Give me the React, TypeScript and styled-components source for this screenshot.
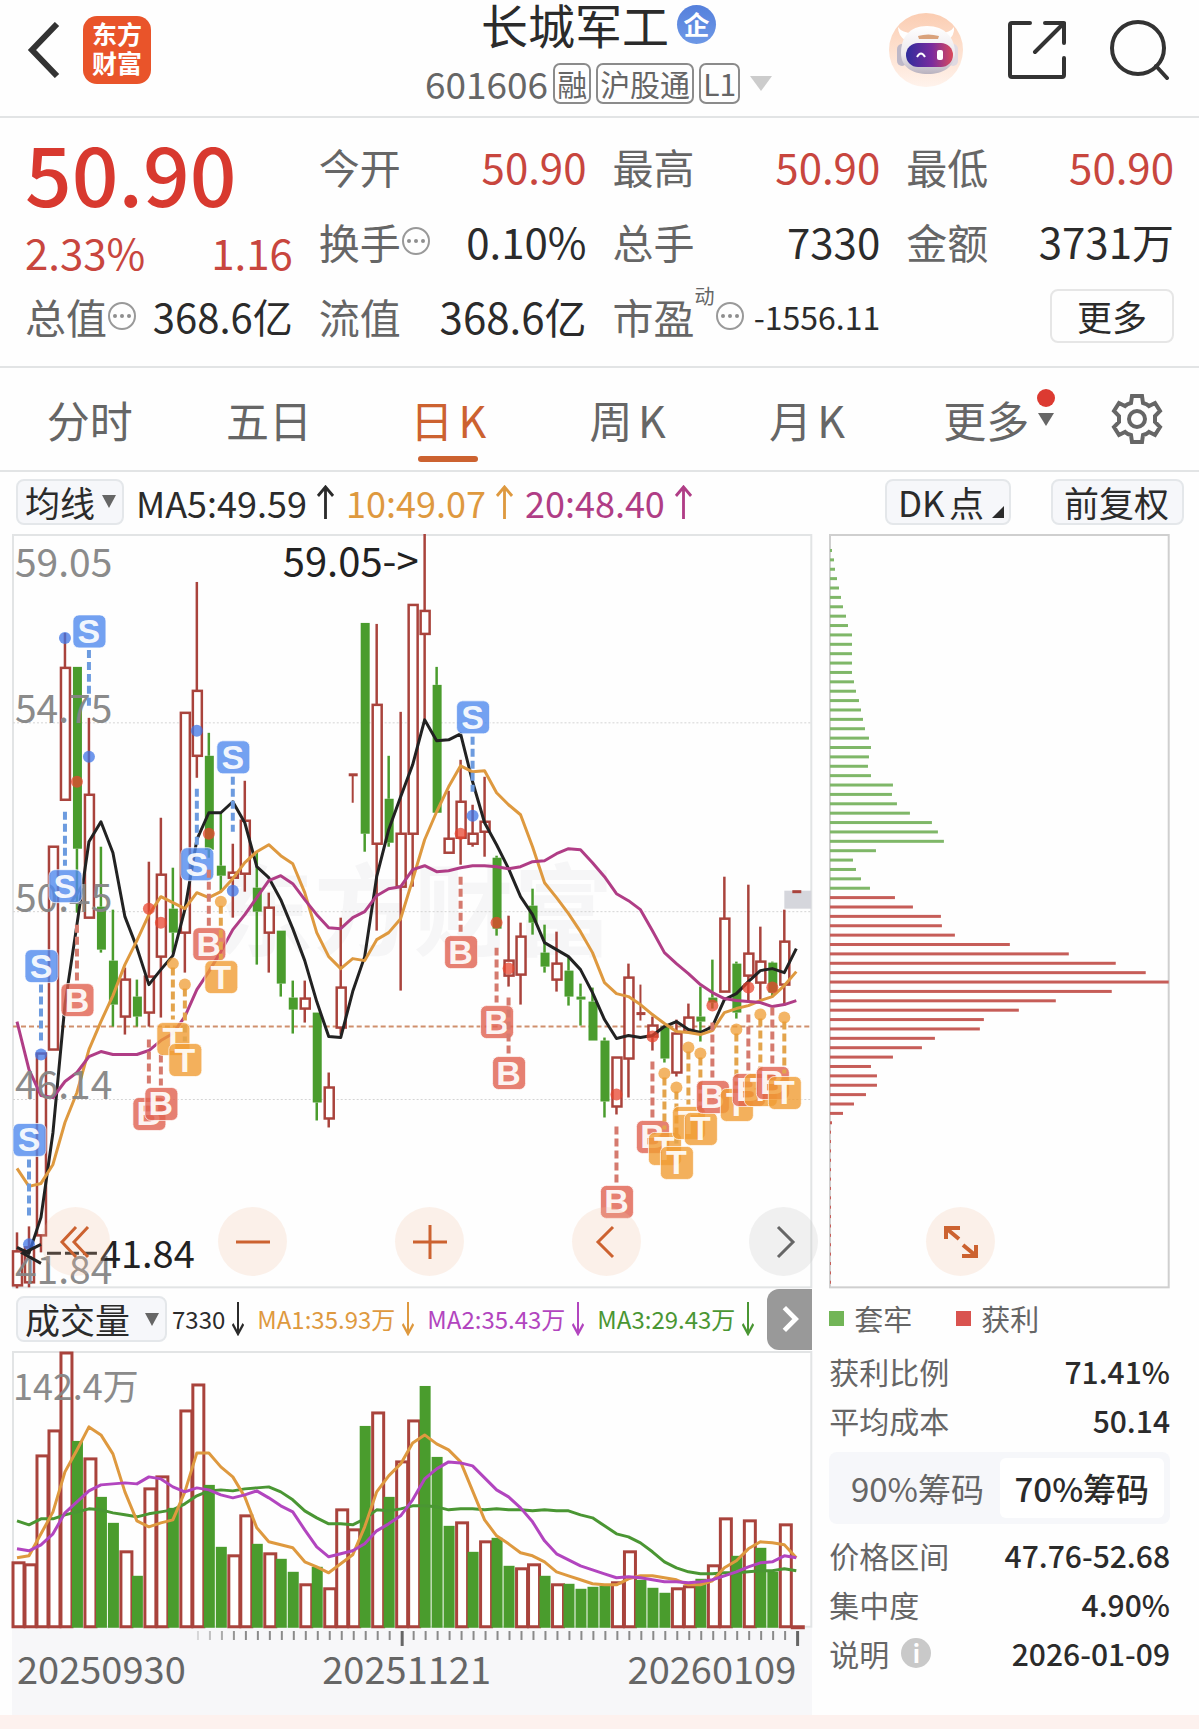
import React, { useState } from "react";
import styled, { createGlobalStyle, css } from "styled-components";

const color = {
  ink: "#2b2b2b",
  label: "#666666",
  up: "#d8392f",
  rise: "#a9433c",
  fall: "#4a9c2d",
  accent: "#cc6230",
  line: "#e2e4e5",
  amber: "#de993f",
  violet: "#b03d86",
  purple: "#b245bf",
  green: "#4a9633",
};

const fontStack = '"Noto Sans CJK SC", "Noto Sans", sans-serif';

const GlobalStyle = createGlobalStyle`
  *, *::before, *::after { box-sizing: border-box; }
  body { margin: 0; background: #fefefe; font-family: ${fontStack}; color: ${color.ink}; }
  button, select { font-family: inherit; color: inherit; margin: 0; }
  button { padding: 0; border: 0; background: none; cursor: pointer; }
  svg { display: block; }
  h1, p, dl, dd, dt { margin: 0; font-weight: 400; }
`;

/* ---------- header ---------- */

const Header = styled.header`
  display: grid;
  grid-template-columns: 1fr auto 1fr;
  height: 118px;
  padding: 0 29px 0 27px;
  border-bottom: 2px solid ${color.line};
`;

const HeaderSide = styled.div<{ $end?: boolean }>`
  display: flex;
  align-items: center;
  height: 100px;
  gap: ${(p) => (p.$end ? "43px" : "23px")};
  justify-content: ${(p) => (p.$end ? "flex-end" : "flex-start")};
`;

const Brand = styled.div`
  width: 68px;
  height: 68px;
  padding-top: 3px;
  border-radius: 14px;
  background: #e9542a;
  color: #fff;
  font-size: 25px;
  font-weight: 700;
  line-height: 29px;
  text-align: center;
`;

const TitleBlock = styled.div`
  display: flex;
  flex-direction: column;
  align-items: center;
`;

const TitleRow = styled.div`
  display: flex;
  align-items: center;
  gap: 8px;
  height: 48px;
`;

const StockName = styled.h1`
  font-size: 47px;
  line-height: 48px;
`;

const CompanyBadge = styled.span`
  width: 39px;
  height: 39px;
  border-radius: 50%;
  background: linear-gradient(#5580dc, #6d98e6);
  color: #fff;
  font-size: 26px;
  font-weight: 700;
  line-height: 37px;
  text-align: center;
`;

const CodeRow = styled.div`
  display: flex;
  align-items: center;
  gap: 5px;
  height: 70px;
  color: ${color.label};
`;

const Code = styled.span`
  font-size: 37px;
  line-height: 42px;
`;

const Tag = styled.span`
  height: 41px;
  padding: 0 2px;
  border: 2px solid #8b8b8b;
  border-radius: 7px;
  font-size: 30px;
  line-height: 36px;
`;

const Caret = styled.i<{ $w: number; $h: number; $c: string }>`
  width: 0;
  height: 0;
  border: solid transparent;
  border-width: ${(p) => `${p.$h}px ${p.$w / 2}px 0`};
  border-top-color: ${(p) => p.$c};
`;

const CodeCaret = styled(Caret)`
  margin-left: 5px;
`;

/* ---------- quote ---------- */

const Quote = styled.section`
  display: grid;
  grid-template-columns: repeat(4, minmax(0, 1fr));
  grid-template-rows: repeat(3, 75px);
  column-gap: 26px;
  padding: 10px 25px 13px;
  border-bottom: 2px solid ${color.line};
`;

const Price = styled.div`
  grid-row: span 2;
  color: ${color.up};
`;

const Last = styled.p`
  font-size: 82px;
  font-weight: 500;
  line-height: 88px;
`;

const Change = styled.p`
  display: flex;
  justify-content: space-between;
  padding-top: 8px;
  font-size: 42px;
  line-height: 56px;
  color: #c8463e;
`;

const Cell = styled.div`
  display: flex;
  align-items: center;
  white-space: nowrap;
`;

const CellLabel = styled.span`
  font-size: 41px;
  line-height: 56px;
  color: ${color.label};
`;

const Sup = styled.sup`
  align-self: flex-start;
  padding-top: 4px;
  font-size: 20px;
  line-height: 28px;
  color: ${color.label};
`;

const CellValue = styled.span<{ $up?: boolean; $size?: number }>`
  margin-left: auto;
  font-size: ${(p) => p.$size ?? 42}px;
  line-height: 56px;
  color: ${(p) => (p.$up ? "#c8463e" : color.ink)};
`;

const MoreButton = styled.button`
  width: 124px;
  height: 54px;
  margin-left: auto;
  border: 2px solid #e6e6e6;
  border-radius: 8px;
  font-size: 35px;
  line-height: 48px;
`;

/* ---------- tabs ---------- */

const Tabs = styled.nav`
  display: flex;
  height: 104px;
  border-bottom: 2px solid ${color.line};
`;

const Tab = styled.button<{ $on?: boolean }>`
  position: relative;
  flex: 1;
  font-size: 43px;
  line-height: 60px;
  text-autospace: normal;
  color: ${(p) => (p.$on ? color.accent : color.label)};
  ${(p) =>
    p.$on &&
    css`
      &::after {
        content: "";
        position: absolute;
        left: 50%;
        bottom: 8px;
        width: 60px;
        height: 6px;
        margin-left: -30px;
        border-radius: 3px;
        background: ${color.accent};
      }
    `}
`;

const TabMark = styled.span`
  position: absolute;
  top: 21px;
  right: 21px;
  display: flex;
  flex-direction: column;
  align-items: center;
  gap: 6px;
`;

const RedDot = styled.i`
  width: 18px;
  height: 18px;
  border-radius: 50%;
  background: #dc3a31;
`;

const GearButton = styled.button`
  display: flex;
  align-items: center;
  justify-content: center;
  width: 123px;
`;

/* ---------- toolbars ---------- */

const Toolbar = styled.div`
  display: flex;
  align-items: center;
  height: 62px;
  padding: 0 15px 3px 16px;
`;

const boxed = css`
  height: 46px;
  border: 2px solid #e4e7ea;
  border-radius: 8px;
  background: #f6f7fa;
  font-size: 35px;
  line-height: 40px;
`;

const Picker = styled.label`
  position: relative;
  display: flex;
  align-items: center;
`;

const PickerSelect = styled.select<{ $room: number }>`
  ${boxed}
  appearance: none;
  padding: 0 ${(p) => p.$room}px 0 7px;
  outline: none;
`;

const PickerCaret = styled(Caret)`
  position: absolute;
  right: 8px;
  pointer-events: none;
`;

const BoxButton = styled.button<{ $corner?: boolean }>`
  ${boxed}
  position: relative;
  padding: 0 ${(p) => (p.$corner ? "25px" : "13px")} 0 11px;
  margin-left: ${(p) => (p.$corner ? "auto" : "40px")};
  text-autospace: normal;
  ${(p) =>
    p.$corner &&
    css`
      &::after {
        content: "";
        position: absolute;
        right: 5px;
        bottom: 5px;
        border: solid transparent;
        border-width: 0 0 12px 12px;
        border-bottom-color: ${color.ink};
      }
    `}
`;

const Average = styled.span<{ $c: string }>`
  display: flex;
  align-items: center;
  gap: 10px;
  margin-left: 12px;
  font-size: 36px;
  line-height: 46px;
  color: ${(p) => p.$c};
`;

/* ---------- charts ---------- */

const Board = styled.main`
  display: grid;
  grid-template-columns: minmax(0, 801fr) minmax(0, 341fr);
  column-gap: 17px;
  padding: 0 29px 0 12px;
`;

const Plot = styled.div`
  position: relative;
`;

const Drawing = styled.svg`
  width: 100%;
  height: auto;
  overflow: visible;
  font-family: ${fontStack};
`;

const PlotControls = styled.div`
  position: absolute;
  left: 29px;
  right: -6px;
  bottom: 12px;
  display: flex;
  justify-content: space-between;
`;

const RoundButton = styled.button<{ $muted?: boolean }>`
  display: flex;
  align-items: center;
  justify-content: center;
  width: 69px;
  height: 69px;
  border-radius: 50%;
  background: ${(p) => (p.$muted ? "rgba(200, 200, 200, 0.25)" : "rgba(240, 190, 160, 0.22)")};
  color: ${(p) => (p.$muted ? "#666" : color.accent)};
`;

const ExpandSlot = styled.div`
  position: absolute;
  left: 97px;
  bottom: 12px;
`;

const VolumeBar = styled.div`
  display: flex;
  align-items: center;
  height: 63px;
  padding: 0 0 1px 4px;
`;

const VolumeItem = styled.span<{ $c: string }>`
  display: flex;
  align-items: center;
  gap: 7px;
  margin-left: 5px;
  font-size: 24px;
  line-height: 46px;
  white-space: nowrap;
  color: ${(p) => p.$c};
  & + & {
    margin-left: 13px;
  }
`;

const NextButton = styled.button`
  display: flex;
  align-items: center;
  justify-content: center;
  width: 45px;
  height: 61px;
  margin-left: auto;
  border-radius: 12px 0 0 12px;
  background: #999;
  color: #fff;
`;

const Axis = styled.div`
  height: 87px;
  background: #f7f7f9;
`;

const Dates = styled.div`
  display: flex;
  justify-content: space-between;
  padding: 0 16px 0 5px;
  font-size: 38px;
  line-height: 36px;
  color: ${color.label};
`;

/* ---------- cost panel ---------- */

const Legend = styled.div`
  display: flex;
  align-items: center;
  gap: 44px;
  height: 58px;
  padding-top: 2px;
  font-size: 29px;
  line-height: 40px;
  color: ${color.label};
`;

const LegendItem = styled.span<{ $c: string }>`
  display: flex;
  align-items: center;
  gap: 10px;
  &::before {
    content: "";
    width: 15px;
    height: 15px;
    background: ${(p) => p.$c};
  }
`;

const Facts = styled.dl``;

const Fact = styled.div`
  display: flex;
  align-items: center;
  justify-content: space-between;
  height: 49px;
  line-height: 48px;
`;

const FactLabel = styled.dt`
  display: flex;
  align-items: center;
  gap: 12px;
  font-size: 30px;
  color: ${color.label};
`;

const FactValue = styled.dd`
  font-size: 30px;
  font-weight: 500;
`;

const InfoDot = styled.button`
  width: 30px;
  height: 30px;
  border-radius: 50%;
  background: #c9c9c9;
  color: #fff;
  font-size: 24px;
  font-weight: 700;
  line-height: 28px;
`;

const Segments = styled.div`
  display: grid;
  grid-template-columns: 1fr 1fr;
  height: 72px;
  margin: 8px 0 6px;
  padding: 6px;
  border-radius: 8px;
  background: #f6f7fa;
`;

const Segment = styled.button<{ $on: boolean }>`
  border-radius: 6px;
  background: ${(p) => (p.$on ? "#fff" : "transparent")};
  color: ${(p) => (p.$on ? color.ink : color.label)};
  font-size: 33px;
  font-weight: ${(p) => (p.$on ? 500 : 400)};
  line-height: 58px;
  white-space: nowrap;
`;

const FootStrip = styled.footer`
  height: 14px;
  background: #fdf1ee;
`;

/* ---------- data ---------- */

// kind, high, body top, body bottom, low
type Candle = ["r" | "g", number, number, number, number];

const candles: Candle[] = [
  ["r", 1233, 1252, 1286, 1289], ["r", 1227, 1248, 1283, 1288], ["r", 1054, 1054, 1236, 1253],
  ["r", 847, 847, 1050, 1050], ["r", 633, 668, 800, 800], ["g", 667, 667, 849, 913],
  ["r", 718, 795, 918, 918], ["g", 847, 907, 950, 953], ["g", 910, 961, 1005, 1027],
  ["r", 968, 980, 1017, 1035], ["g", 980, 997, 1017, 1027], ["r", 862, 977, 1013, 1027],
  ["r", 818, 875, 957, 1018], ["g", 868, 909, 933, 953], ["r", 713, 713, 933, 973],
  ["r", 582, 691, 756, 778], ["g", 733, 756, 850, 858], ["g", 813, 866, 876, 892],
  ["r", 844, 873, 878, 918], ["r", 781, 821, 874, 892], ["g", 852, 888, 912, 965],
  ["r", 893, 908, 933, 973], ["g", 931, 931, 984, 997], ["g", 981, 998, 1010, 1034],
  ["r", 981, 999, 1009, 1023], ["g", 1013, 1013, 1103, 1121], ["r", 1073, 1088, 1119, 1128],
  ["r", 918, 988, 1028, 1035], ["r", 775, 775, 776, 803], ["g", 623, 623, 834, 852],
  ["r", 624, 705, 844, 931], ["g", 756, 799, 843, 847], ["r", 712, 834, 887, 991],
  ["r", 605, 605, 834, 887], ["r", 534, 611, 634, 720], ["g", 667, 685, 813, 813],
  ["r", 791, 839, 853, 853], ["r", 760, 802, 838, 865], ["r", 805, 834, 844, 847],
  ["r", 777, 822, 832, 857], ["g", 856, 858, 929, 936], ["r", 916, 961, 976, 987],
  ["r", 923, 937, 975, 1005], ["g", 889, 906, 923, 935], ["g", 925, 953, 967, 973],
  ["r", 932, 964, 980, 992], ["g", 957, 971, 997, 1006], ["g", 984, 997, 1000, 1026],
  ["g", 988, 1002, 1041, 1041], ["g", 1038, 1041, 1102, 1118], ["r", 1058, 1058, 1107, 1115],
  ["r", 964, 978, 1059, 1098], ["r", 985, 1014, 1016, 1021], ["r", 1017, 1026, 1037, 1051],
  ["g", 1027, 1027, 1059, 1063], ["r", 1020, 1034, 1073, 1077], ["r", 1004, 1018, 1032, 1033],
  ["g", 987, 1017, 1022, 1042], ["g", 960, 998, 1003, 1009], ["r", 877, 919, 992, 992],
  ["g", 962, 964, 1013, 1019], ["r", 885, 954, 976, 1003], ["r", 927, 962, 983, 1000],
  ["g", 962, 963, 993, 997], ["r", 910, 942, 985, 1006], ["r", 892, 892, 892, 892],
];

const ma5 = [1248, 1254, 1218, 1133, 1005, 925, 842, 822, 853, 917, 948, 985, 970, 956, 910, 840, 813, 813, 802, 823, 867, 878, 900, 929, 961, 1002, 1037, 1038, 992, 957, 877, 830, 797, 765, 720, 741, 740, 734, 782, 823, 845, 869, 897, 915, 943, 950, 957, 970, 993, 1020, 1039, 1036, 1038, 1036, 1027, 1022, 1030, 1033, 1027, 1000, 994, 982, 971, 969, 973, 949];
const ma10 = [1169, 1187, 1184, 1165, 1123, 1093, 1050, 1022, 996, 965, 941, 915, 897, 903, 909, 893, 898, 892, 879, 863, 852, 845, 856, 864, 893, 933, 957, 969, 959, 961, 940, 933, 919, 880, 840, 812, 787, 766, 772, 771, 793, 805, 815, 847, 883, 898, 914, 932, 953, 983, 994, 997, 1005, 1015, 1024, 1032, 1033, 1035, 1031, 1013, 1009, 1006, 1001, 997, 986, 972];
const ma20 = [1022, 1070, 1096, 1098, 1082, 1073, 1057, 1052, 1055, 1055, 1055, 1051, 1041, 1034, 1017, 990, 972, 952, 930, 915, 898, 881, 876, 884, 900, 915, 928, 929, 918, 912, 896, 889, 887, 870, 866, 872, 871, 868, 866, 866, 867, 869, 867, 862, 861, 854, 849, 850, 863, 877, 894, 901, 910, 931, 953, 964, 974, 985, 993, 999, 1001, 1002, 1003, 1007, 1005, 1001];

// slot, letter, centre of the badge, dashed stem from / to, dot
type Signal = [number, "S" | "B" | "T", number, number, number, number];

const signals: Signal[] = [
  [1, "S", 1140, 1160, 1216, 1245], [2, "S", 966, 985, 1041, 1055], [4, "S", 886, 812, 866, 638],
  [5, "B", 1000, 925, 981, 782], [6, "S", 631, 650, 706, 757], [11, "B", 1114, 1040, 1084, 909],
  [12, "B", 1104, 1055, 1086, 923], [13, "T", 1039, 968, 1020, 964], [14, "T", 1060, 989, 1042, 985],
  [15, "S", 864, 789, 845, 731], [16, "B", 944, 870, 926, 834], [17, "T", 977, 906, 960, 902],
  [18, "S", 757, 777, 832, 891], [37, "B", 952, 877, 932, 834], [38, "S", 717, 737, 792, 816],
  [40, "B", 1022, 948, 1003, 923], [41, "B", 1073, 998, 1054, 969], [50, "B", 1202, 1127, 1183, 1095],
  [53, "B", 1137, 1062, 1118, 1037], [54, "T", 1149, 1078, 1130, 1074], [55, "T", 1163, 1092, 1144, 1088],
  [56, "T", 1123, 1052, 1105, 1048], [57, "T", 1129, 1058, 1111, 1054], [58, "B", 1097, 1023, 1078, 1006],
  [60, "T", 1105, 1034, 1086, 1030], [61, "B", 1090, 1015, 1071, 988], [62, "T", 1090, 1019, 1071, 1015],
  [63, "B", 1083, 1008, 1064, 988], [64, "T", 1093, 1022, 1074, 1018],
];

const signalColor = { S: "#5089ee", B: "#e0604f", T: "#f09c33" };
const stemColor = { S: "#6c9bdf", B: "#d57a6e", T: "#e3a44c" };

const volumeKinds = "rrrrrgrggrgrrgrrggrrgrggrgrrrgrgrrgggrgrggrrgrggggrrgggrrgrrgrggrr";
const volumeTops = [1563, 1565, 1456, 1431, 1353, 1442, 1459, 1498, 1524, 1552, 1577, 1489, 1477, 1509, 1411, 1385, 1486, 1548, 1556, 1516, 1545, 1554, 1560, 1573, 1585, 1568, 1589, 1510, 1530, 1427, 1413, 1498, 1462, 1421, 1387, 1458, 1527, 1523, 1553, 1542, 1539, 1567, 1569, 1565, 1577, 1585, 1585, 1590, 1588, 1587, 1583, 1552, 1581, 1589, 1594, 1589, 1587, 1580, 1566, 1519, 1557, 1521, 1549, 1573, 1525, 1627];

// volume averages, in thirds of a unit below y = 1290
const volumeFast = [806, 800, 735, 670, 548, 483, 413, 438, 495, 610, 695, 713, 703, 693, 608, 493, 491, 535, 563, 625, 718, 760, 768, 776, 820, 833, 852, 825, 798, 715, 610, 560, 525, 462, 439, 466, 483, 520, 605, 693, 742, 765, 792, 800, 820, 850, 862, 872, 886, 888, 888, 870, 860, 862, 867, 873, 888, 888, 875, 838, 815, 780, 758, 761, 767, 808];
const volumeMid = [781, 785, 767, 735, 672, 640, 605, 588, 585, 583, 586, 565, 570, 595, 610, 596, 603, 618, 626, 617, 606, 628, 650, 668, 722, 775, 805, 795, 787, 765, 725, 705, 680, 632, 570, 540, 520, 523, 530, 567, 602, 625, 657, 700, 755, 795, 813, 832, 843, 856, 868, 865, 867, 873, 878, 880, 882, 880, 873, 860, 848, 835, 823, 820, 800, 808];
const volumeSlow = [695, 709, 690, 690, 678, 670, 659, 663, 672, 678, 684, 675, 668, 664, 645, 620, 605, 602, 605, 600, 597, 595, 610, 632, 665, 686, 704, 706, 708, 690, 664, 665, 660, 650, 650, 655, 663, 660, 659, 662, 661, 663, 664, 665, 663, 667, 666, 678, 688, 712, 736, 744, 762, 790, 820, 838, 848, 855, 856, 853, 852, 850, 845, 846, 840, 846];

const trapped = [2, 4, 5, 7, 9, 11, 13, 16, 18, 22, 22, 22, 22, 22, 24, 26, 29, 31, 33, 35, 39, 41, 39, 38, 41, 63, 62, 67, 80, 102, 108, 114, 46, 23, 26, 31, 40];
const winning = [65, 83, 111, 112, 125, 180, 239, 286, 316, 339, 282, 226, 189, 154, 150, 105, 92, 63, 41, 47, 47, 36, 24, 13, 2, ...Array(17).fill(1)];

const slotX = (i: number) => 17 + 12 * i;
const toPoints = (ys: number[]) => ys.map((y, i) => `${slotX(i)},${y}`).join(" ");
const fromThirds = (ys: number[]) => ys.map((y) => Math.round(1290 + y / 3));

/* ---------- small drawings ---------- */

const ArrowIcon = ({ down, narrow }: { down?: boolean; narrow?: boolean }) => (
  <svg width={narrow ? 12 : 17} height="34" viewBox="0 0 18 34" preserveAspectRatio="none" fill="none" stroke="currentColor" strokeWidth="3">
    <path d={down ? "M9 0V32M1 22L9 32L17 22" : "M9 34V2M1 11L9 2L17 11"} />
  </svg>
);

const MoreDots = () => (
  <svg width="30" height="30" viewBox="0 0 30 30" fill="#8e8e8e">
    <circle cx="15" cy="15" r="13" fill="none" stroke="#999" strokeWidth="2" />
    <circle cx="8" cy="15" r="2" />
    <circle cx="15" cy="15" r="2" />
    <circle cx="22" cy="15" r="2" />
  </svg>
);

const Robot = () => (
  <svg width="75" height="75" viewBox="0 0 75 75">
    <defs>
      <linearGradient id="halo" x1="0" y1="0" x2="0" y2="1">
        <stop offset="0" stopColor="#fbcdb2" />
        <stop offset="1" stopColor="#fff3ec" />
      </linearGradient>
      <linearGradient id="visor" x1="0" y1="0" x2="1" y2="0">
        <stop offset="0" stopColor="#2f2c9c" />
        <stop offset="0.55" stopColor="#7a2b9e" />
        <stop offset="1" stopColor="#d94a5c" />
      </linearGradient>
      <linearGradient id="shell" x1="0" y1="0" x2="0" y2="1">
        <stop offset="0" stopColor="#ffffff" />
        <stop offset="0.6" stopColor="#ece8ec" />
        <stop offset="1" stopColor="#b9b2bf" />
      </linearGradient>
    </defs>
    <circle cx="37" cy="37" r="37" fill="url(#halo)" />
    <path d="M9 14Q9 23 17 28L24 20Q13 20 9 14ZM65 14Q66 23 58 28L51 20Q61 20 65 14Z" fill="#fff" />
    <rect x="8" y="31" width="10" height="22" rx="5" fill="#bdb8c8" />
    <rect x="59" y="31" width="10" height="22" rx="5" fill="#e0dae2" />
    <path d="M38 13C56 13 66 25 66 40C66 54 54 61 39 61C23 61 12 54 12 40C12 25 20 13 38 13Z" fill="url(#shell)" />
    <path d="M29 23Q39 20 50 23L49 26H30Z" fill="#d9a27c" />
    <rect x="17" y="30" width="47" height="24" rx="12" fill="url(#visor)" />
    <path d="M28 44Q32 37 36 44" fill="none" stroke="#fff" strokeWidth="2" />
    <rect x="48" y="37" width="6" height="10" rx="2" fill="#fff" />
  </svg>
);

const Gear = () => (
  <svg width="52" height="54" viewBox="0 0 52 54" fill="none" stroke="#666" strokeWidth="4">
    <path d="M21 4H31L32 11Q36 12 38 14L44 11L49 19L44 24V30L49 35L44 43L38 40Q36 42 32 43L31 50H21L20 43Q16 42 14 40L8 43L3 35L8 30V24L3 19L8 11L14 14Q16 12 20 11Z" />
    <circle cx="26" cy="27" r="8" />
  </svg>
);

const Glyph = ({ d, size = 34, weight = 4 }: { d: string; size?: number; weight?: number }) => (
  <svg width={size} height={size} viewBox="0 0 34 34" fill="none" stroke="currentColor" strokeWidth={weight}>
    <path d={d} />
  </svg>
);

/* ---------- charts ---------- */

const CandleShape = ({ data, x }: { data: Candle; x: number }) => {
  const [kind, high, top, bottom, low] = data;
  const tint = kind === "r" ? color.rise : color.fall;
  if (bottom - top < 3) {
    return (
      <g stroke={tint} strokeWidth="3">
        <path d={`M${x - 4} ${top}H${x + 5}`} />
        {low > high && <path d={`M${x} ${high}V${low}`} strokeWidth="2" />}
      </g>
    );
  }
  return (
    <g stroke={tint} strokeWidth="2.5">
      {high < top && <path d={`M${x} ${high}V${top}`} />}
      {low > bottom && <path d={`M${x} ${bottom}V${low}`} />}
      {kind === "g" ? (
        <rect x={x - 4} y={top} width="9" height={bottom - top} fill={tint} stroke="none" />
      ) : (
        <rect x={x - 4} y={top} width="9" height={bottom - top} fill="#fff" />
      )}
    </g>
  );
};

const axisLabels: [string, number][] = [["59.05", 577], ["54.75", 723], ["50.45", 912], ["46.14", 1100], ["41.84", 1285]];

const PriceChart = () => (
  <Drawing viewBox="12 534 801 755" role="img" aria-label="日K">
    <text x="214" y="948" fontSize="100" fontWeight="700" fill="#f6f6f7">东方财富</text>
    <rect x="13" y="535" width="799" height="753" fill="none" stroke={color.line} strokeWidth="2" />
    {[723, 912, 1100].map((y) => (
      <path key={y} d={`M13 ${y}H812`} stroke="#d4d4d4" strokeDasharray="2 2" />
    ))}
    <path d="M13 1027H812" stroke="#cf8f6c" strokeWidth="2" strokeDasharray="5 3" />
    <rect x="785" y="891" width="27" height="18" fill="#d5d6dc" />
    {candles.map((c, i) => (
      <CandleShape key={i} data={c} x={slotX(i)} />
    ))}
    <g fill="none" strokeWidth="3" strokeLinejoin="round">
      <polyline points={toPoints(ma5)} stroke="#222" />
      <polyline points={toPoints(ma10)} stroke={color.amber} />
      <polyline points={toPoints(ma20)} stroke={color.violet} />
    </g>
    <g fontSize="39" fill="#858585" opacity="0.95">
      {axisLabels.map(([t, y]) => (
        <text key={t} x="15" y={y}>{t}</text>
      ))}
    </g>
    {signals.map(([slot, letter, cy, from, to, dot]) => {
      const x = slotX(slot);
      return (
        <g key={slot}>
          <path d={`M${x} ${from}V${to}`} stroke={stemColor[letter]} strokeWidth="4" strokeDasharray="8 4" />
          <circle cx={x} cy={dot} r="6" fill={letter === "S" ? "#3f74e6" : letter === "B" ? "#e8452f" : "#ef9c33"} opacity="0.75" />
          <rect x={x - 16} y={cy - 16} width="33" height="33" rx="6" fill={signalColor[letter]} fillOpacity="0.8" stroke="#fff" strokeOpacity="0.7" />
          <text x={x} y={cy + 12} textAnchor="middle" fontFamily="Liberation Sans" fontWeight="700" fontSize="34" fill="#fff" fillOpacity="0.92">{letter}</text>
        </g>
      );
    })}
    <g fontSize="40" fill="#222">
      <text x="283" y="576">59.05-&gt;</text>
      <text x="100" y="1269" fontSize="38">41.84</text>
    </g>
    <path d="M41 1245L23 1254L41 1264M47 1254H61M65 1254H79M83 1254H97" fill="none" stroke="#222" strokeWidth="3" />
  </Drawing>
);

const VolumeChart = () => (
  <Drawing viewBox="12 1352 801 277" role="img" aria-label="成交量">
    <rect x="13" y="1353" width="799" height="275" fill="none" stroke={color.line} strokeWidth="2" />
    {volumeTops.map((top, i) => {
      const x = slotX(i);
      return volumeKinds[i] === "g" ? (
        <rect key={i} x={x - 5} y={top} width="11" height={1629 - top} fill={color.fall} />
      ) : (
        <rect key={i} x={x - 4} y={top + 1} width="11" height={Math.max(1627 - top, 1)} fill="#fff" stroke={color.rise} strokeWidth="3" />
      );
    })}
    <text x="13" y="1401" fontSize="36" fill="#858585" opacity="0.95">142.4万</text>
    <g fill="none" strokeWidth="3" strokeLinejoin="round">
      <polyline points={toPoints(fromThirds(volumeSlow))} stroke={color.green} />
      <polyline points={toPoints(fromThirds(volumeFast))} stroke={color.amber} />
      <polyline points={toPoints(fromThirds(volumeMid))} stroke={color.purple} />
    </g>
  </Drawing>
);

const AxisTicks = () => (
  <Drawing viewBox="12 0 801 22" aria-hidden="true">
    {Array.from({ length: 51 }, (_, i) => {
      const major = i === 17 || i === 50;
      return (
        <rect
          key={i}
          x={197 + 12 * i}
          y="3"
          width={major ? 3 : 2}
          height={major ? 15 : 9}
          fill={major ? "#666" : "#8a8a8a"}
          opacity={Math.min(1, 0.3 + i * 0.2)}
        />
      );
    })}
  </Drawing>
);

const CostChart = () => (
  <Drawing viewBox="830 534 341 755" role="img" aria-label="筹码分布">
    <rect x="831" y="535" width="339" height="753" fill="none" stroke="#cfcfcf" strokeWidth="2" />
    {[...trapped, ...winning].map((w, i) => (
      <rect key={i} x="831" y={549 + 9.39 * i} width={w} height="3" fill={i < trapped.length ? "#7fb768" : "#c65d58"} />
    ))}
  </Drawing>
);

/* ---------- page ---------- */

type Item = { label: string; value: string; up?: boolean; dots?: boolean; sup?: string; size?: number };

const QuoteCell = ({ item }: { item: Item }) => (
  <Cell>
    <CellLabel>{item.label}</CellLabel>
    {item.sup && <Sup>{item.sup}</Sup>}
    {item.dots && <MoreDots />}
    <CellValue $up={item.up} $size={item.size}>{item.value}</CellValue>
  </Cell>
);

const quoteItems: Item[] = [
  { label: "今开", value: "50.90", up: true },
  { label: "最高", value: "50.90", up: true },
  { label: "最低", value: "50.90", up: true },
  { label: "换手", value: "0.10%", dots: true },
  { label: "总手", value: "7330" },
  { label: "金额", value: "3731万" },
  { label: "总值", value: "368.6亿", dots: true, size: 40 },
  { label: "流值", value: "368.6亿" },
  { label: "市盈", value: "-1556.11", sup: "动", dots: true, size: 32 },
];

export default function App() {
  const [tab, setTab] = useState("日K");
  const [share, setShare] = useState("70%筹码");

  return (
    <>
      <GlobalStyle />
      <Header>
        <HeaderSide>
          <button aria-label="返回">
            <svg width="33" height="56" viewBox="0 0 33 56" fill="none" stroke="#333" strokeWidth="6">
              <path d="M30 2L5 28L30 54" />
            </svg>
          </button>
          <Brand>东方<br />财富</Brand>
        </HeaderSide>
        <TitleBlock>
          <TitleRow>
            <StockName>长城军工</StockName>
            <CompanyBadge>企</CompanyBadge>
          </TitleRow>
          <CodeRow>
            <Code>601606</Code>
            <Tag>融</Tag>
            <Tag>沪股通</Tag>
            <Tag>L1</Tag>
            <CodeCaret $w={22} $h={15} $c="#ccc" />
          </CodeRow>
        </TitleBlock>
        <HeaderSide $end>
          <button aria-label="智能助手"><Robot /></button>
          <button aria-label="分享">
            <svg width="60" height="60" viewBox="0 0 60 60" fill="none" stroke="#333" strokeWidth="4" strokeLinecap="round" strokeLinejoin="round">
              <path d="M23 3H5Q3 3 3 5V55Q3 57 5 57H55Q57 57 57 55V38M38 3H57V23M57 3L28 32" />
            </svg>
          </button>
          <button aria-label="搜索">
            <svg width="60" height="60" viewBox="0 0 60 60" fill="none" stroke="#333" strokeWidth="4" strokeLinecap="round">
              <circle cx="28" cy="28" r="26" />
              <path d="M46 46L57 58" />
            </svg>
          </button>
        </HeaderSide>
      </Header>

      <Quote>
        <Price>
          <Last>50.90</Last>
          <Change><span>2.33%</span><span>1.16</span></Change>
        </Price>
        {quoteItems.map((item) => (
          <QuoteCell key={item.label} item={item} />
        ))}
        <Cell><MoreButton>更多</MoreButton></Cell>
      </Quote>

      <Tabs>
        {["分时", "五日", "日K", "周K", "月K"].map((t) => (
          <Tab key={t} $on={t === tab} onClick={() => setTab(t)}>{t}</Tab>
        ))}
        <Tab>
          更多
          <TabMark>
            <RedDot />
            <Caret $w={16} $h={13} $c="#666" />
          </TabMark>
        </Tab>
        <GearButton aria-label="设置"><Gear /></GearButton>
      </Tabs>

      <Toolbar>
        <Picker>
          <PickerSelect $room={26} aria-label="主图指标"><option>均线</option></PickerSelect>
          <PickerCaret $w={15} $h={13} $c="#666" />
        </Picker>
        <Average $c="#2b2b2b">MA5:49.59<ArrowIcon /></Average>
        <Average $c={color.amber}>10:49.07<ArrowIcon /></Average>
        <Average $c={color.violet}>20:48.40<ArrowIcon /></Average>
        <BoxButton $corner>DK点</BoxButton>
        <BoxButton>前复权</BoxButton>
      </Toolbar>

      <Board>
        <section>
          <Plot>
            <PriceChart />
            <PlotControls>
              <RoundButton aria-label="最早"><Glyph d="M17 2L3 17L17 32M29 2L15 17L29 32" weight={3} /></RoundButton>
              <RoundButton aria-label="缩小"><Glyph d="M0 17H34" weight={3} /></RoundButton>
              <RoundButton aria-label="放大"><Glyph d="M0 17H34M17 0V34" weight={3} /></RoundButton>
              <RoundButton aria-label="向前"><Glyph d="M23 2L8 17L23 32" weight={3} /></RoundButton>
              <RoundButton aria-label="向后" $muted><Glyph d="M11 2L26 17L11 32" weight={3} /></RoundButton>
            </PlotControls>
          </Plot>
          <VolumeBar>
            <Picker>
              <PickerSelect $room={34} aria-label="副图指标"><option>成交量</option></PickerSelect>
              <PickerCaret $w={15} $h={13} $c="#666" />
            </Picker>
            <VolumeItem $c="#2b2b2b">7330<ArrowIcon down narrow /></VolumeItem>
            <VolumeItem $c={color.amber}>MA1:35.93万<ArrowIcon down narrow /></VolumeItem>
            <VolumeItem $c={color.purple}>MA2:35.43万<ArrowIcon down narrow /></VolumeItem>
            <VolumeItem $c={color.green}>MA3:29.43万<ArrowIcon down narrow /></VolumeItem>
            <NextButton aria-label="更多指标"><Glyph d="M11 5L23 17L11 29" size={32} weight={5} /></NextButton>
          </VolumeBar>
          <VolumeChart />
          <Axis>
            <AxisTicks />
            <Dates><span>20250930</span><span>20251121</span><span>20260109</span></Dates>
          </Axis>
        </section>

        <aside>
          <Plot>
            <CostChart />
            <ExpandSlot>
              <RoundButton aria-label="展开">
                <Glyph d="M2 14V3H16M3 4L15 14M32 20V31H18M31 30L19 20" weight={4} />
              </RoundButton>
            </ExpandSlot>
          </Plot>
          <Legend>
            <LegendItem $c="#72b557">套牢</LegendItem>
            <LegendItem $c="#d9534f">获利</LegendItem>
          </Legend>
          <Facts>
            <Fact><FactLabel>获利比例</FactLabel><FactValue>71.41%</FactValue></Fact>
            <Fact><FactLabel>平均成本</FactLabel><FactValue>50.14</FactValue></Fact>
          </Facts>
          <Segments>
            {["90%筹码", "70%筹码"].map((s) => (
              <Segment key={s} $on={s === share} aria-pressed={s === share} onClick={() => setShare(s)}>{s}</Segment>
            ))}
          </Segments>
          <Facts>
            <Fact><FactLabel>价格区间</FactLabel><FactValue>47.76-52.68</FactValue></Fact>
            <Fact><FactLabel>集中度</FactLabel><FactValue>4.90%</FactValue></Fact>
            <Fact>
              <FactLabel>说明<InfoDot aria-label="说明">i</InfoDot></FactLabel>
              <FactValue>2026-01-09</FactValue>
            </Fact>
          </Facts>
        </aside>
      </Board>
      <FootStrip />
    </>
  );
}
